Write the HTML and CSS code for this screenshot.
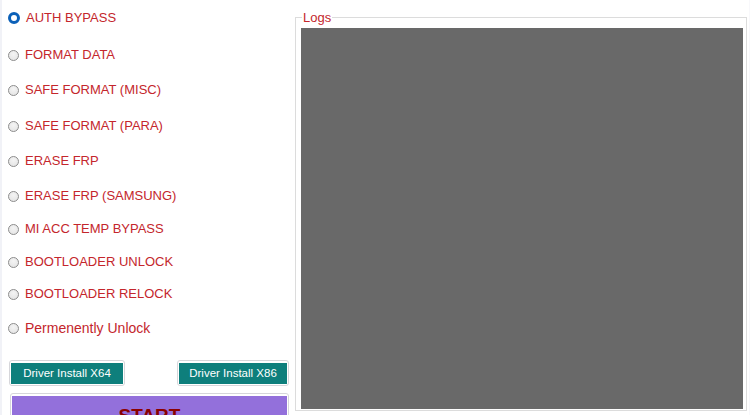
FILE: index.html
```html
<!DOCTYPE html>
<html>
<head>
<meta charset="utf-8">
<link rel="stylesheet" href="styles.css">
</head>
<body>
<div class="page">
  <div class="left">
    <div class="options">
      <label class="opt"><span class="radio on"></span><span class="lbl">AUTH BYPASS</span></label>
      <label class="opt"><span class="radio"></span><span class="lbl">FORMAT DATA</span></label>
      <label class="opt"><span class="radio"></span><span class="lbl">SAFE FORMAT (MISC)</span></label>
      <label class="opt"><span class="radio"></span><span class="lbl">SAFE FORMAT (PARA)</span></label>
      <label class="opt"><span class="radio"></span><span class="lbl">ERASE FRP</span></label>
      <label class="opt"><span class="radio"></span><span class="lbl">ERASE FRP (SAMSUNG)</span></label>
      <label class="opt"><span class="radio"></span><span class="lbl">MI ACC TEMP BYPASS</span></label>
      <label class="opt"><span class="radio"></span><span class="lbl">BOOTLOADER UNLOCK</span></label>
      <label class="opt"><span class="radio"></span><span class="lbl">BOOTLOADER RELOCK</span></label>
      <label class="opt"><span class="radio"></span><span class="lbl big">Permenently Unlock</span></label>
    </div>
    <div class="drivers">
      <div class="btnwrap"><div class="btn btn64">Driver Install X64</div></div>
      <div class="btnwrap"><div class="btn btn86">Driver Install X86</div></div>
    </div>
    <div class="startwrap"><div class="start">START</div></div>
  </div>
  <fieldset class="logs">
    <legend>Logs</legend>
    <div class="logbox"></div>
  </fieldset>
  <div class="edge"></div>
</div>
</body>
</html>
```

FILE: styles.css
```css
html, body {
  margin: 0;
  padding: 0;
  background: #ffffff;
  font-family: "Liberation Sans", Arial, sans-serif;
  overflow: hidden;
}
.page {
  width: 750px;
  height: 415px;
  display: flex;
  flex-direction: row;
  align-items: flex-start;
}
.left {
  width: 294px;
  height: 415px;
  box-sizing: border-box;
  border-left: 2px solid #f1f2f7;
  display: flex;
  flex-direction: column;
}
.options {
  display: grid;
  grid-template-rows: 37px 35px 36px 35px 35px 33px 33px 32px 34px 20px;
  padding-top: 8px;
  padding-left: 6px;
}
.opt {
  display: flex;
  align-items: center;
  height: 20px;
}
.radio {
  width: 11px;
  height: 11px;
  box-sizing: border-box;
  border-radius: 50%;
  border: 1px solid #8c8c8c;
  background: radial-gradient(circle at 50% 35%, #f4f4f4 0%, #e2e2e2 100%);
  margin-right: 6px;
  flex: none;
}
.radio.on {
  width: 12px;
  height: 12px;
  border: 3px solid #0b60b8;
  background: #ffffff;
  margin-right: 6px;
}
.lbl {
  color: #c4262c;
  font-size: 13px;
  line-height: 16px;
  white-space: nowrap;
}
.lbl.big {
  font-size: 14px;
}
.drivers {
  display: flex;
  justify-content: space-between;
  margin-top: 22px;
  padding-left: 7px;
  padding-right: 5px;
}
.btnwrap {
  border: 1px solid #d6d6da;
  border-radius: 3px;
  padding: 2px 1px 1px 1px;
  background: #ffffff;
}
.btn {
  background: #0e7f7c;
  color: #ffffff;
  font-size: 11.5px;
  height: 21px;
  line-height: 21px;
  text-align: center;
}
.btn64 { width: 112px; }
.btn86 { width: 108px; }
.startwrap {
  margin-top: 7px;
  margin-left: 8px;
  margin-right: 5px;
  border: 1px solid #d6d6da;
  border-radius: 3px;
  padding: 2px 1px 0 1px;
}
.start {
  background: #9370db;
  color: #8b0000;
  font-weight: bold;
  font-size: 19px;
  height: 40px;
  line-height: 40px;
  text-align: center;
}
.logs {
  margin: 10px 0 0 1px;
  width: 452px;
  height: 401px;
  box-sizing: border-box;
  border: 1px solid #dcdcdc;
  padding: 3px 3px 1px 5px;
  min-width: 0;
}
.logs legend {
  color: #c4262c;
  font-size: 13px;
  line-height: 15px;
  padding: 0 1px;
  margin-left: 1px;
}
.logbox {
  background: #696969;
  width: 442px;
  height: 381px;
}
.edge {
  flex: 1;
  height: 415px;
  background: #f8f8fb;
  margin-left: 2px;
}
```
